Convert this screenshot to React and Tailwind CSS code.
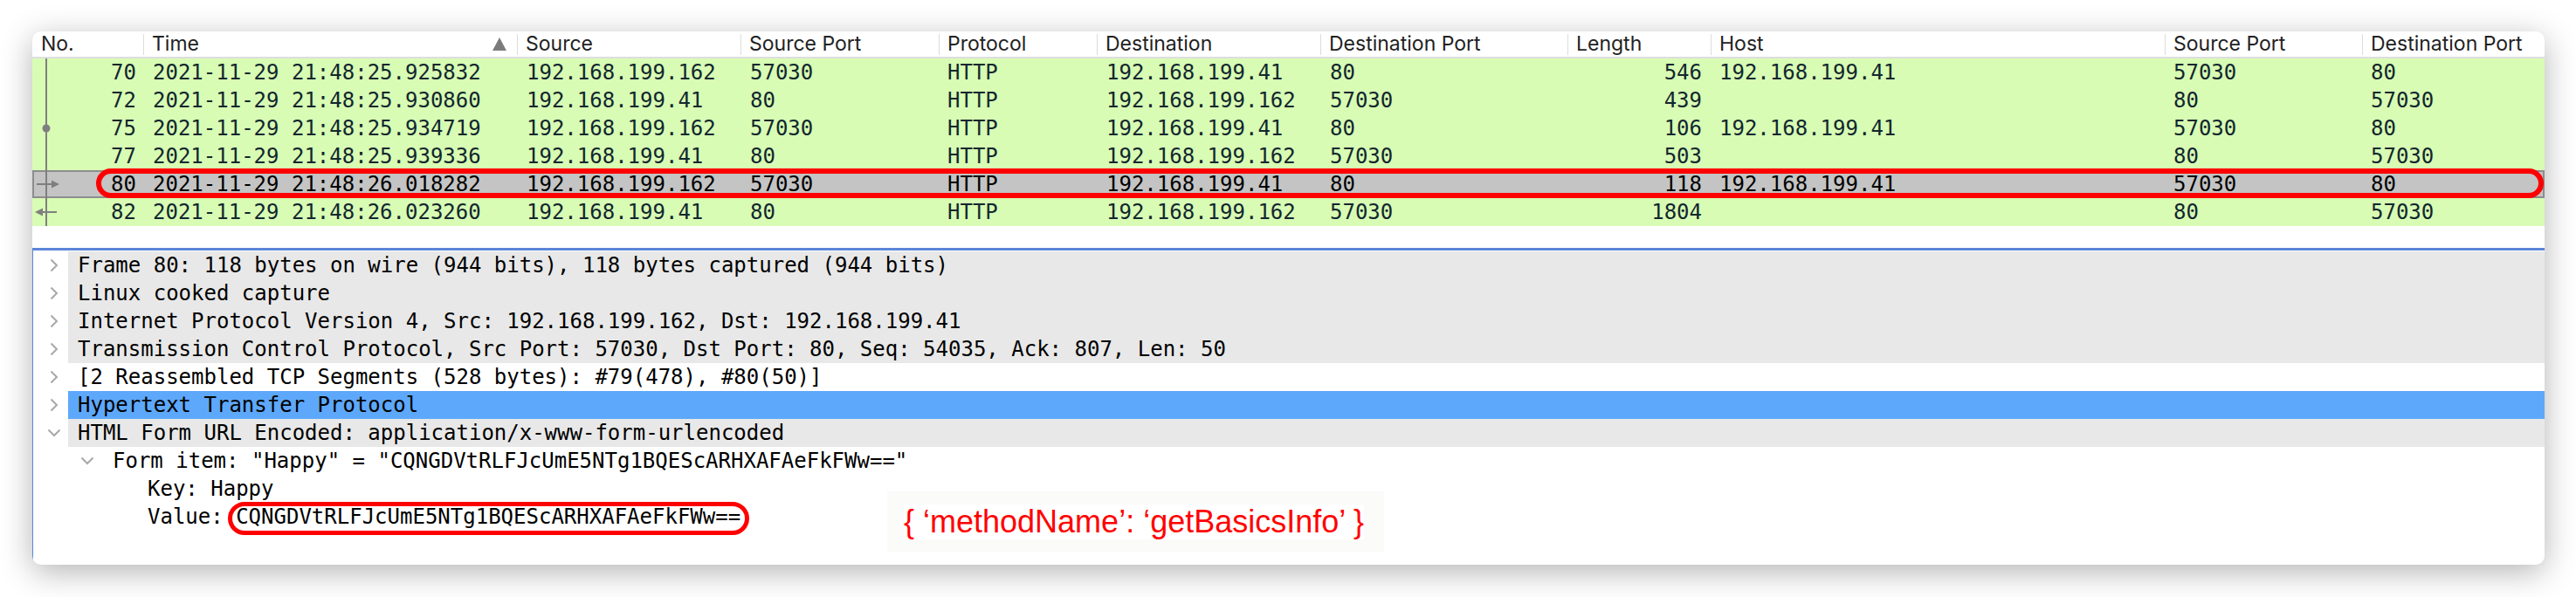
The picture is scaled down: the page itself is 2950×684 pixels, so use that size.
import React from 'react';

const headers = [
  ['No.', 'w-[127px]'],
  ['Time', 'w-[428px]'],
  ['Source', 'w-[256px]'],
  ['Source Port', 'w-[227px]'],
  ['Protocol', 'w-[181px]'],
  ['Destination', 'w-[256px]'],
  ['Destination Port', 'w-[283px]'],
  ['Length', 'w-[164px]'],
  ['Host', 'w-[520px]'],
  ['Source Port', 'w-[226px]'],
  ['Destination Port', 'w-[209px]'],
];

const packets = [
  { no: '70', time: '2021-11-29 21:48:25.925832', src: '192.168.199.162', sport: '57030', dst: '192.168.199.41', dport: '80', len: '546', host: '192.168.199.41', mark: 'line' },
  { no: '72', time: '2021-11-29 21:48:25.930860', src: '192.168.199.41', sport: '80', dst: '192.168.199.162', dport: '57030', len: '439', host: '', mark: 'line' },
  { no: '75', time: '2021-11-29 21:48:25.934719', src: '192.168.199.162', sport: '57030', dst: '192.168.199.41', dport: '80', len: '106', host: '192.168.199.41', mark: 'dot' },
  { no: '77', time: '2021-11-29 21:48:25.939336', src: '192.168.199.41', sport: '80', dst: '192.168.199.162', dport: '57030', len: '503', host: '', mark: 'line' },
  { no: '80', time: '2021-11-29 21:48:26.018282', src: '192.168.199.162', sport: '57030', dst: '192.168.199.41', dport: '80', len: '118', host: '192.168.199.41', mark: 'right', selected: true },
  { no: '82', time: '2021-11-29 21:48:26.023260', src: '192.168.199.41', sport: '80', dst: '192.168.199.162', dport: '57030', len: '1804', host: '', mark: 'left' },
];

function Related({ mark }) {
  return (
    <svg width="40" height="32" viewBox="0 0 40 32" className="shrink-0">
      <line x1="16" y1="0" x2="16" y2="32" stroke="#7f7f7f" strokeWidth="2" />
      {mark === 'dot' && <circle cx="16" cy="16" r="4.5" fill="#7f7f7f" />}
      {mark === 'right' && (
        <>
          <line x1="5" y1="16" x2="24" y2="16" stroke="#7f7f7f" strokeWidth="2" />
          <polygon points="31,16 22,11.5 22,20.5" fill="#7f7f7f" />
        </>
      )}
      {mark === 'left' && (
        <>
          <line x1="10" y1="16" x2="28" y2="16" stroke="#7f7f7f" strokeWidth="2" />
          <polygon points="3,16 12,11.5 12,20.5" fill="#7f7f7f" />
        </>
      )}
    </svg>
  );
}

function ChevronRight() {
  return (
    <svg width="10" height="16" viewBox="0 0 10 16">
      <polyline points="1.5,1.5 8,8 1.5,14.5" fill="none" stroke="#a8a8a8" strokeWidth="2" />
    </svg>
  );
}

function ChevronDown() {
  return (
    <svg width="16" height="10" viewBox="0 0 16 10">
      <polyline points="1.5,1.5 8,8 14.5,1.5" fill="none" stroke="#a8a8a8" strokeWidth="2" />
    </svg>
  );
}

function PacketRow({ p }) {
  return (
    <div
      className={`relative flex h-[32px] items-center whitespace-nowrap ${
        p.selected ? 'bg-[#c4c4c4] text-black shadow-[inset_0_0_0_2px_#8d8d8d]' : 'bg-[#d8fcb4] text-[#12272e]'
      }`}
    >
      <div className="flex w-[127px] shrink-0 items-center pr-[8px]">
        <Related mark={p.mark} />
        <span className="ml-auto">{p.no}</span>
      </div>
      <div className="w-[428px] shrink-0 pl-[11px]">{p.time}</div>
      <div className="w-[256px] shrink-0 pl-[11px]">{p.src}</div>
      <div className="w-[227px] shrink-0 pl-[11px]">{p.sport}</div>
      <div className="w-[181px] shrink-0 pl-[10px]">HTTP</div>
      <div className="w-[256px] shrink-0 pl-[11px]">{p.dst}</div>
      <div className="w-[283px] shrink-0 pl-[11px]">{p.dport}</div>
      <div className="w-[164px] shrink-0 pr-[10px] text-right">{p.len}</div>
      <div className="w-[520px] shrink-0 pl-[10px]">{p.host}</div>
      <div className="w-[226px] shrink-0 pl-[10px]">{p.sport}</div>
      <div className="w-[209px] shrink-0 pl-[10px]">{p.dport}</div>
      {p.selected && (
        <div className="pointer-events-none absolute -top-[2px] left-[73px] right-[1px] h-[34px] rounded-full border-[6px] border-[#ff0000]" />
      )}
    </div>
  );
}

function TreeRow({ chevron, bg, children }) {
  return (
    <div className="flex h-[32px]">
      <div className="flex w-[40px] shrink-0 items-center justify-center pl-[8px]">
        {chevron === 'right' ? <ChevronRight /> : <ChevronDown />}
      </div>
      <div className={`flex flex-1 items-center pl-[11px] ${bg}`}>{children}</div>
    </div>
  );
}

export default function App() {
  return (
    <div className="h-[684px] w-[2950px] overflow-hidden bg-white pl-[37px] pt-[36px]">
      <div className="relative flex h-[611px] w-[2877px] flex-col overflow-hidden rounded-[10px] bg-white shadow-[0_8px_36px_rgba(0,0,0,0.3)]">
        {/* packet list header */}
        <div className="flex h-[31px] shrink-0 border-b-2 border-[#dedede] font-['Inter',sans-serif] text-[23px] text-[#222]">
          {headers.map(([label, w], i) => (
            <div key={i} className={`flex shrink-0 items-center ${w}`}>
              {i > 0 && <div className="h-[24px] w-px bg-[#dcdcdc]" />}
              <span className={i === 0 ? 'pl-[10px]' : 'pl-[9px]'}>{label}</span>
              {label === 'Time' && (
                <svg width="16" height="15" viewBox="0 0 16 15" className="ml-auto mr-[12px]">
                  <polygon points="8,0 16,15 0,15" fill="#7b7b7b" />
                </svg>
              )}
            </div>
          ))}
        </div>

        {/* packet list */}
        <div className="h-[217px] shrink-0 font-['DejaVu_Sans_Mono',monospace] text-[24px] leading-[32px]">
          {packets.map((p) => (
            <PacketRow key={p.no} p={p} />
          ))}
        </div>

        {/* packet details */}
        <div className="flex-1 border-l border-t-[3px] border-[#5b85d8] pt-[1px] font-['DejaVu_Sans_Mono',monospace] text-[24px] leading-[32px] text-black whitespace-nowrap">
          <TreeRow chevron="right" bg="bg-[#e8e8e8]">Frame 80: 118 bytes on wire (944 bits), 118 bytes captured (944 bits)</TreeRow>
          <TreeRow chevron="right" bg="bg-[#e8e8e8]">Linux cooked capture</TreeRow>
          <TreeRow chevron="right" bg="bg-[#e8e8e8]">Internet Protocol Version 4, Src: 192.168.199.162, Dst: 192.168.199.41</TreeRow>
          <TreeRow chevron="right" bg="bg-[#e8e8e8]">Transmission Control Protocol, Src Port: 57030, Dst Port: 80, Seq: 54035, Ack: 807, Len: 50</TreeRow>
          <TreeRow chevron="right" bg="bg-white">[2 Reassembled TCP Segments (528 bytes): #79(478), #80(50)]</TreeRow>
          <TreeRow chevron="right" bg="bg-[#5da8fa]">Hypertext Transfer Protocol</TreeRow>
          <TreeRow chevron="down" bg="bg-[#e8e8e8]">HTML Form URL Encoded: application/x-www-form-urlencoded</TreeRow>
          <div className="flex h-[32px] items-center pl-[54px]">
            <ChevronDown />
            <span className="ml-[21px]">Form item: "Happy" = "CQNGDVtRLFJcUmE5NTg1BQEScARHXAFAeFkFWw=="</span>
          </div>
          <div className="flex h-[32px] items-center pl-[131px]">Key: Happy</div>
          <div className="flex h-[32px] items-center pl-[131px]">
            Value:&nbsp;
            <span className="relative inline-block">
              CQNGDVtRLFJcUmE5NTg1BQEScARHXAFAeFkFWw==
              <span className="pointer-events-none absolute -bottom-[5px] -left-[9px] -right-[10px] -top-[1px] rounded-full border-[5px] border-[#ff0000]" />
            </span>
          </div>
        </div>

        {/* annotation */}
        <div className="absolute left-[979px] top-[527px] flex h-[69px] w-[569px] items-center bg-[#fbfbfa] pl-[19px]">
          <span className="bg-white font-['Liberation_Sans',Arial,sans-serif] text-[36px] leading-[40px] text-[#ff0000]">
            {'{ \u2018methodName\u2019: \u2018getBasicsInfo\u2019 }'}
          </span>
        </div>
      </div>
    </div>
  );
}
